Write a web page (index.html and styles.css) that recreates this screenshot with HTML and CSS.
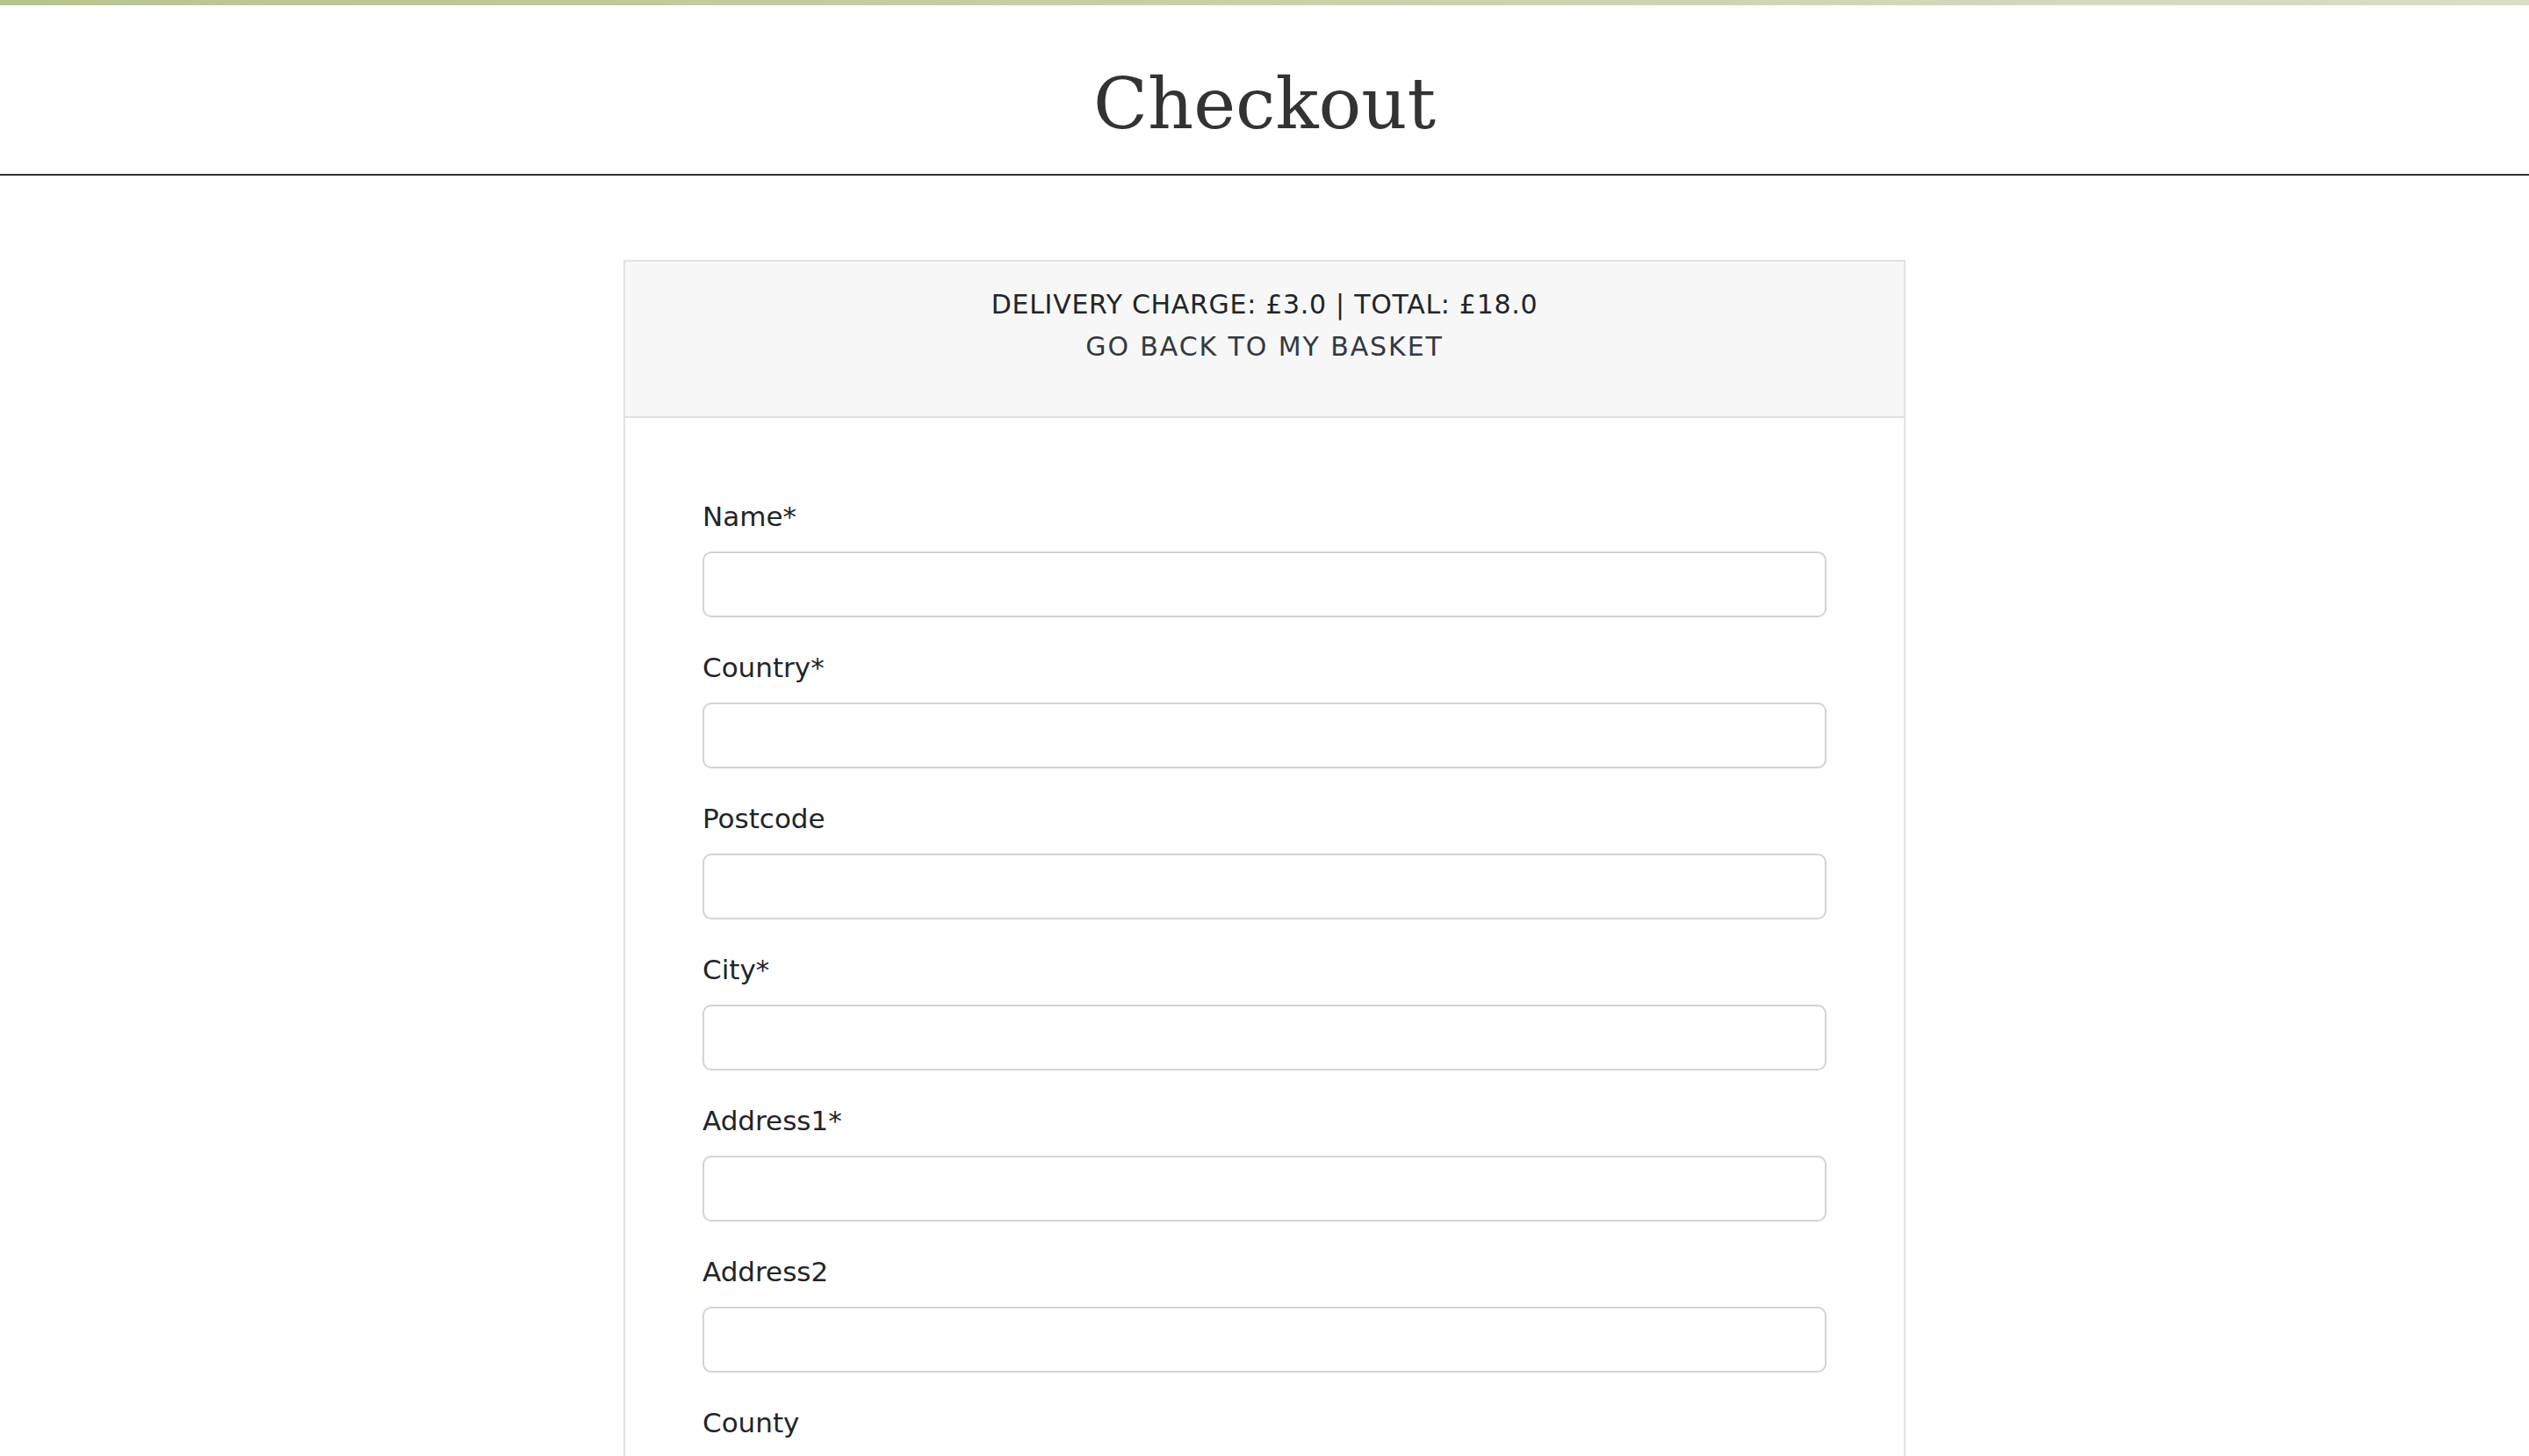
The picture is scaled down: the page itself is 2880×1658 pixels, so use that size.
FILE: index.html
```html
<!DOCTYPE html>
<html lang="en">
<head>
<meta charset="utf-8">
<title>Checkout</title>
<link rel="stylesheet" href="styles.css">
</head>
<body>
<div class="topbar"></div>
<header class="page-header">
  <h1 class="page-title">Checkout</h1>
</header>
<main class="main">
  <section class="card">
    <div class="card-header">
      <div class="summary">DELIVERY CHARGE: £3.0 | TOTAL: £18.0</div>
      <a class="back-link" href="#">GO BACK TO MY BASKET</a>
    </div>
    <form class="card-body">
      <div class="field">
        <label class="label" for="name">Name*</label>
        <input class="input" id="name" type="text">
      </div>
      <div class="field">
        <label class="label" for="country">Country*</label>
        <input class="input" id="country" type="text">
      </div>
      <div class="field">
        <label class="label" for="postcode">Postcode</label>
        <input class="input" id="postcode" type="text">
      </div>
      <div class="field">
        <label class="label" for="city">City*</label>
        <input class="input" id="city" type="text">
      </div>
      <div class="field">
        <label class="label" for="address1">Address1*</label>
        <input class="input" id="address1" type="text">
      </div>
      <div class="field">
        <label class="label" for="address2">Address2</label>
        <input class="input" id="address2" type="text">
      </div>
      <div class="field">
        <label class="label" for="county">County</label>
        <input class="input" id="county" type="text">
      </div>
      <div class="field">
        <label class="label" for="email">Email*</label>
        <input class="input" id="email" type="email">
      </div>
    </form>
  </section>
</main>
</body>
</html>
```
FILE: styles.css
```css
html, body {
  margin: 0;
  padding: 0;
  background: #ffffff;
}

body {
  font-family: "DejaVu Sans", "Open Sans", sans-serif;
  color: #212529;
}

.topbar {
  height: 6px;
  background: linear-gradient(100deg, #b8c48e 0%, #c9d0a9 50%, #d9dec5 100%);
}

.page-header {
  border-bottom: 2px solid #333333;
  text-align: center;
}

.page-title {
  margin: 0;
  padding: 62px 0 30px;
  font-family: "DejaVu Serif", "Liberation Serif", serif;
  font-weight: 400;
  font-size: 81px;
  line-height: 100px;
  color: #333333;
}

.main {
  display: flex;
  justify-content: center;
  padding-top: 96px;
}

.card {
  width: 1460px;
  box-sizing: border-box;
  border: 2px solid #dfe2e6;
}

.card-header {
  background: #f7f7f7;
  border-bottom: 2px solid #dcdee0;
  height: 178px;
  box-sizing: border-box;
  padding-top: 25px;
  display: flex;
  flex-direction: column;
  align-items: center;
  font-size: 30px;
  line-height: 48px;
  letter-spacing: 0.7px;
}

.summary {
  color: #212529;
}

.back-link {
  color: #343a40;
  text-decoration: none;
  letter-spacing: 1.9px;
}

.card-body {
  display: flex;
  flex-direction: column;
  gap: 37px;
  padding: 92px 88px 60px;
}

.field {
  display: flex;
  flex-direction: column;
}

.label {
  font-size: 31px;
  line-height: 40px;
  margin-bottom: 20px;
  color: #212529;
}

.input {
  height: 75px;
  box-sizing: border-box;
  border: 2px solid #ced4da;
  border-radius: 10px;
  background: #ffffff;
  font-size: 28px;
  padding: 0 20px;
  outline: none;
}
```
